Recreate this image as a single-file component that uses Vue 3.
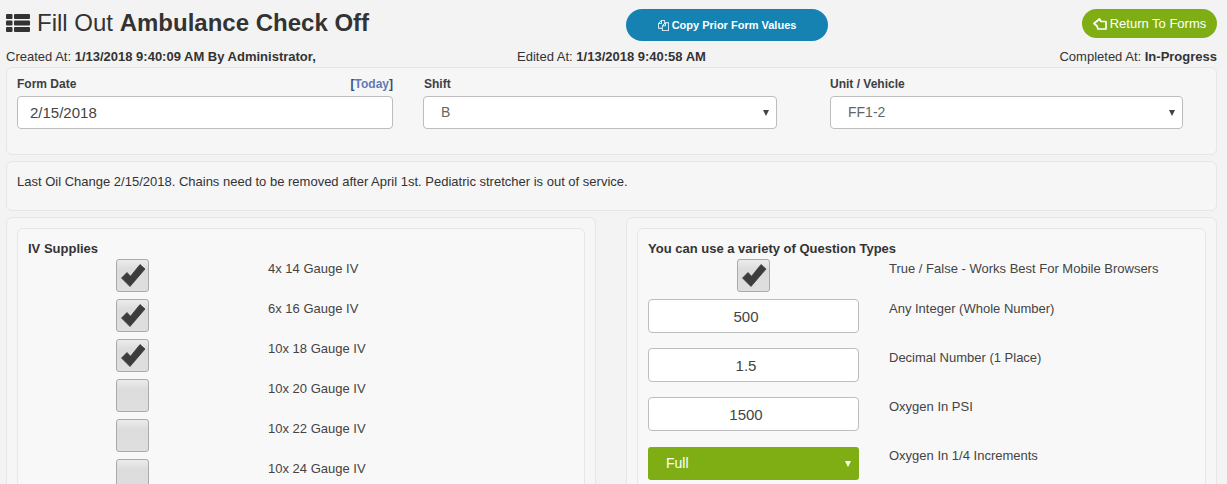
<script setup>
const supplies = [
  { label: '4x 14 Gauge IV', checked: true },
  { label: '6x 16 Gauge IV', checked: true },
  { label: '10x 18 Gauge IV', checked: true },
  { label: '10x 20 Gauge IV', checked: false },
  { label: '10x 22 Gauge IV', checked: false },
  { label: '10x 24 Gauge IV', checked: false },
]
const numbers = [
  { value: '500', label: 'Any Integer (Whole Number)' },
  { value: '1.5', label: 'Decimal Number (1 Place)' },
  { value: '1500', label: 'Oxygen In PSI' },
]
const checkPoints = '5.5,19 11,13.5 14.5,17.3 24,5.5 29,10 14,27.5'
</script>

<template>
  <div class="page">
    <header class="top">
      <h1 class="title">
        <svg class="list-icon" viewBox="0 0 24 19" width="24" height="18" preserveAspectRatio="none" aria-hidden="true">
          <g fill="#333">
            <rect x="0" y="0" width="6.5" height="5.2" rx="1" />
            <rect x="8" y="0" width="16" height="5.2" rx="1" />
            <rect x="0" y="6.9" width="6.5" height="5.2" rx="1" />
            <rect x="8" y="6.9" width="16" height="5.2" rx="1" />
            <rect x="0" y="13.8" width="6.5" height="5.2" rx="1" />
            <rect x="8" y="13.8" width="16" height="5.2" rx="1" />
          </g>
        </svg>
        <span>Fill Out <b>Ambulance Check Off</b></span>
      </h1>
      <button class="btn btn-copy" type="button">
        <svg viewBox="0 0 1792 1792" width="11" height="11" aria-hidden="true" fill="#fff">
          <path d="M1696 384q40 0 68 28t28 68v1216q0 40-28 68t-68 28h-960q-40 0-68-28t-28-68v-288h-544q-40 0-68-28t-28-68v-672q0-40 20-88t48-76l408-408q28-28 76-48t88-20h416q40 0 68 28t28 68v328q68-40 128-40h416zm-544 213l-299 299h299v-299zm-640-384l-299 299h299v-299zm196 647l316-316v-416h-384v416q0 40-28 68t-68 28h-416v640h512v-256q0-40 20-88t48-76zm956 804v-1152h-384v416q0 40-28 68t-68 28h-416v640h896z" />
        </svg>
        Copy Prior Form Values
      </button>
      <button class="btn btn-return" type="button">
        <svg viewBox="0 0 14 12" width="14" height="12" aria-hidden="true" fill="none" stroke="#fff" stroke-width="1.7" stroke-linejoin="round">
          <path d="M1 5.5 L6.5 1 L8 3.5 H13 V11 H5 L4 8 Z" />
        </svg>
        Return To Forms
      </button>
    </header>

    <div class="meta">
      <span class="meta-left">Created At: <b>1/13/2018 9:40:09 AM By Administrator,</b></span>
      <span class="meta-center">Edited At: <b>1/13/2018 9:40:58 AM</b></span>
      <span class="meta-right">Completed At: <b>In-Progress</b></span>
    </div>

    <section class="panel form-panel">
      <div class="field date-field">
        <div class="label-row">
          <label>Form Date</label>
          <span class="today">[<a>Today</a>]</span>
        </div>
        <div class="control">2/15/2018</div>
      </div>
      <div class="field shift-field">
        <div class="label-row label-inset"><label>Shift</label></div>
        <div class="control select">B<i class="caret"></i></div>
      </div>
      <div class="field unit-field">
        <div class="label-row"><label>Unit / Vehicle</label></div>
        <div class="control select">FF1-2<i class="caret"></i></div>
      </div>
    </section>

    <section class="panel note">
      Last Oil Change 2/15/2018. Chains need to be removed after April 1st. Pediatric stretcher is out of service.
    </section>

    <div class="columns">
      <section class="panel outer">
        <div class="inner">
          <h2>IV Supplies</h2>
          <div v-for="item in supplies" :key="item.label" class="row row-left">
            <div class="answer">
              <span class="check">
                <svg v-if="item.checked" viewBox="0 0 33 33" width="33" height="33" aria-hidden="true"><polygon :points="checkPoints" fill="#3c3c3c" stroke="#3c3c3c" stroke-width="0.8" stroke-linejoin="round" /></svg>
              </span>
            </div>
            <div class="question">{{ item.label }}</div>
          </div>
        </div>
      </section>

      <section class="panel outer">
        <div class="inner">
          <h2>You can use a variety of Question Types</h2>
          <div class="row">
            <div class="answer">
              <span class="check">
                <svg viewBox="0 0 33 33" width="33" height="33" aria-hidden="true"><polygon :points="checkPoints" fill="#3c3c3c" stroke="#3c3c3c" stroke-width="0.8" stroke-linejoin="round" /></svg>
              </span>
            </div>
            <div class="question">True / False - Works Best For Mobile Browsers</div>
          </div>
          <div v-for="n in numbers" :key="n.label" class="row row-num">
            <div class="answer"><div class="num">{{ n.value }}</div></div>
            <div class="question">{{ n.label }}</div>
          </div>
          <div class="row row-num">
            <div class="answer">
              <div class="green-select">Full<i class="caret caret-white"></i></div>
            </div>
            <div class="question">Oxygen In 1/4 Increments</div>
          </div>
        </div>
      </section>
    </div>
  </div>
</template>

<style>
html, body { margin: 0; background: #f3f3f3; overflow: hidden; }
</style>

<style scoped>
.page {
  box-sizing: border-box;
  width: 1227px;
  height: 484px;
  overflow: hidden;
  padding: 9px 10px 0 6px;
  font-family: "Liberation Sans", Arial, sans-serif;
  font-size: 13px;
  color: #333;
  background: #f3f3f3;
}
.top {
  display: flex;
  justify-content: space-between;
  align-items: flex-start;
  height: 39px;
}
.title {
  display: flex;
  align-items: center;
  gap: 7px;
  margin: 0;
  height: 27px;
  font-size: 24px;
  font-weight: 400;
  line-height: 27px;
  color: #333;
}
.list-icon { flex: none; }
.btn {
  display: inline-flex;
  align-items: center;
  justify-content: center;
  gap: 3px;
  border: 0;
  padding: 0;
  font-family: inherit;
  color: #fff;
}
.btn-copy {
  width: 202px;
  height: 32px;
  margin-left: 3px;
  border-radius: 16px;
  background: #1582b1;
  font-size: 11px;
  font-weight: 700;
}
.btn-return {
  width: 135px;
  height: 29px;
  border-radius: 15px;
  background: #7fae14;
  font-size: 13px;
  font-weight: 400;
}
.meta {
  display: grid;
  grid-template-columns: 1fr auto 1fr;
  height: 19px;
  line-height: 18px;
  color: #333;
}
.meta-right { text-align: right; }
.panel {
  box-sizing: border-box;
  background: #f6f6f6;
  border: 1px solid #e6e6e6;
  border-radius: 6px;
}
.form-panel {
  display: grid;
  grid-template-columns: 406px 407px 353px;
  height: 88px;
  padding: 9px 10px 0;
}
.field { display: flex; flex-direction: column; }
.date-field { width: 376px; }
.shift-field { width: 354px; }
.unit-field { width: 353px; }
.label-row {
  display: flex;
  justify-content: space-between;
  height: 19px;
  line-height: 15px;
  font-size: 12px;
  font-weight: 700;
  color: #3c4043;
}
.label-inset { padding-left: 1px; }
.today { color: #3d4a6b; }
.today a { color: #5f7ab8; }
.control {
  position: relative;
  box-sizing: border-box;
  height: 33px;
  padding-left: 12px;
  line-height: 31px;
  font-size: 15px;
  color: #444;
  background: #fff;
  border: 1px solid #bdbdbd;
  border-radius: 4px;
}
.select { padding-left: 17px; font-size: 14px; color: #666; }
.caret {
  position: absolute;
  right: 7px;
  top: 13px;
  width: 0;
  height: 0;
  border-left: 3px solid transparent;
  border-right: 3px solid transparent;
  border-top: 6px solid #444;
}
.caret-white { border-top-color: #fff; right: 8px; top: 14px; }
.note {
  height: 50px;
  margin-top: 6px;
  padding: 11px 10px 0;
  line-height: 18px;
  color: #333;
}
.columns {
  display: grid;
  grid-template-columns: 590px 591px;
  column-gap: 30px;
  margin-top: 6px;
}
.outer {
  padding: 10px;
  height: 320px;
}
.inner {
  box-sizing: border-box;
  height: 100%;
  padding: 11px 10px;
  background: #f8f8f8;
  border: 1px solid #e6e6e6;
  border-radius: 6px;
}
h2 {
  margin: 0;
  height: 19px;
  font-size: 13px;
  line-height: 18px;
  font-weight: 700;
  color: #333;
}
.row {
  display: grid;
  grid-template-columns: 211px 1fr;
  column-gap: 30px;
  height: 40px;
}
.row-left { grid-template-columns: 209px 1fr; column-gap: 31px; }
.row-num { height: 49px; }
.answer { display: flex; justify-content: center; align-items: flex-start; }
.question { padding-top: 1px; line-height: 18px; color: #444; }
.check {
  box-sizing: border-box;
  position: relative;
  display: block;
  width: 33px;
  height: 33px;
  border: 1px solid #aaa;
  border-radius: 3px;
  background: linear-gradient(#ececec, #dcdcdc 30%, #dedede);
}
.check svg { display: block; margin: -1px; }
.num {
  box-sizing: border-box;
  width: 100%;
  height: 34px;
  line-height: 33px;
  padding-right: 15px;
  text-align: center;
  font-size: 15px;
  color: #444;
  background: #fff;
  border: 1px solid #bdbdbd;
  border-radius: 4px;
}
.green-select {
  position: relative;
  box-sizing: border-box;
  width: 100%;
  height: 33px;
  margin-top: 1px;
  line-height: 33px;
  padding-left: 18px;
  font-size: 14px;
  color: #fff;
  background: #7fae14;
  border-radius: 3px;
}
</style>
